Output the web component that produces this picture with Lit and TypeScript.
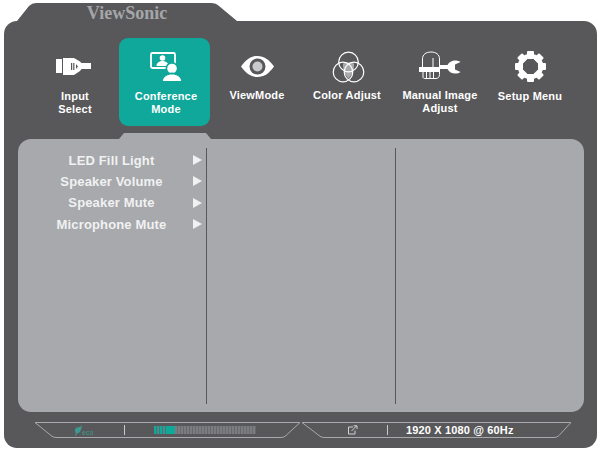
import { LitElement, html, css, svg } from 'lit';
import { customElement } from 'lit/decorators.js';

// icons are drawn in page coordinates, the viewBox is centred on the column
const iconBox = (cx: number) => `${cx - 24} 50 48 36`;

const gearTeeth = Array.from({ length: 8 }, (_, i) => i * 45);

const icons = {
  input: svg`
    <path fill="#fff" d="M56 59h6v14h-6zM63 58h11l6 3.5 1.5 1.5H91v6h-9.5L80 71l-6 4H63z"/>
    <path fill="#58585a" d="M71 63h1.2v7H71zM73.2 63h1.2v7h-1.2zM76 64l2 2.5-2 2.5z"/>`,
  conference: svg`
    <rect x="151" y="53" width="24" height="15" rx="1.5" fill="none" stroke="#fff" stroke-width="1.8"/>
    <circle cx="162.5" cy="58" r="2.8" fill="#fff"/>
    <path fill="#fff" d="M156.5 66c0-3.5 3-5 6-5s6 1.500 6 5z"/>
    <circle cx="172" cy="68.500" r="6.500" fill="#0fa89a"/>
    <circle cx="172" cy="68.500" r="4.800" fill="#fff"/>
    <path fill="#0fa89a" d="M161 82c0-6 5-9.500 11-9.500s11 3.500 11 9.500z"/>
    <path fill="#fff" d="M163 81c0-4 4-6.500 9-6.500s9 2.500 9 6.500z"/>`,
  eye: svg`
    <path fill="#fff" d="M241 66.500C246 59.500 251 56 257.500 56s11.500 3.500 16.500 10.500C269 73.500 264 77 257.500 77S246 73.500 241 66.500z"/>
    <circle cx="257.500" cy="66.500" r="8" fill="#58585a"/>
    <circle cx="257.500" cy="66.500" r="5" fill="#c9cacb"/>`,
  color: svg`
    <path fill="#a7a9ac" d="M343 63.500c3-1.500 7.500-1.500 11 0 .5 6-2 12-5.500 15-3.500-3-6-9-5.500-15z"/>
    <g fill="none" stroke="#fff" stroke-width="1.200">
      <circle cx="348.500" cy="62" r="9.800"/>
      <circle cx="343" cy="72" r="9.800"/>
      <circle cx="354" cy="72" r="9.800"/>
    </g>`,
  manual: svg`
    <path fill="none" stroke="#fff" stroke-width="1" d="M422.500 67V59c0-4.500 3.500-7 8.500-7s8.500 2.500 8.500 7v8M433 67v-9"/>
    <path fill="#fff" d="M419 67h21v5h-21z"/>
    <path fill="none" stroke="#fff" stroke-width="1" d="M423 72v5c0 1 1 1.500 2 1.500h11c2 0 3.500-1.500 3.500-4V72M426.500 72v6M430 72v6M433.500 72v6"/>
    <path fill="#fff" d="M440 65h7.500c1.500-3 4.500-4.500 7.500-4.500 2 0 4 .5 5.500 1.500l-5.500 2.500v5l5.500 2.500c-1.500 1-3.500 1.500-5.500 1.500-3 0-6-1.500-7.500-4.500H440z"/>`,
  setup: svg`
    ${gearTeeth.map(a => svg`<rect x="527" y="51" width="7" height="8" rx="1" fill="#fff" transform="rotate(${a} 530.500 66.500)"/>`)}
    <circle cx="530.500" cy="66.500" r="10.500" fill="none" stroke="#fff" stroke-width="4.500"/>`,
};

const menu = [
  { label: ['Input', 'Select'], icon: icons.input, cx: 75, low: true },
  { label: ['Conference', 'Mode'], icon: icons.conference, cx: 166, active: true, low: true },
  { label: ['ViewMode'], icon: icons.eye, cx: 257 },
  { label: ['Color Adjust'], icon: icons.color, cx: 347 },
  { label: ['Manual Image', 'Adjust'], icon: icons.manual, cx: 440 },
  { label: ['Setup Menu'], icon: icons.setup, cx: 530, low: true },
];

const rows = ['LED Fill Light', 'Speaker Volume', 'Speaker Mute', 'Microphone Mute'];

const bars = Array.from({ length: 34 }, (_, i) => i);

@customElement('app-root')
export class AppRoot extends LitElement {
  static styles = css`
    :host {
      display: block;
      width: 600px;
      height: 457px;
      box-sizing: border-box;
      padding-top: 3px;
      background: #fff;
      font-family: "Liberation Sans", Arial, sans-serif;
      overflow: hidden;
    }
    .tab {
      margin-left: 17px;
      width: 220px;
      height: 18px;
      box-sizing: border-box;
      padding: 3px 0 0 0;
      background: #58585a;
      clip-path: path('M0 18 L12 3 Q15 0 19 0 L194 0 Q199 0 202 3 L220 18 Z');
      display: flex;
      justify-content: center;
      align-items: center;
      font-family: "Liberation Serif", "Times New Roman", serif;
      font-weight: bold;
      font-size: 18px;
      color: #a4a6a9;
    }
    .shell {
      margin: 0 3px 0 4px;
      height: 427px;
      box-sizing: border-box;
      padding-top: 17px;
      background: #58585a;
      border-radius: 13px;
    }
    .menu {
      display: grid;
      grid-template-columns: 89px 91px 94px 86px 100px 80px;
      margin-left: 26px;
      height: 88px;
    }
    .item {
      display: flex;
      flex-direction: column;
      align-items: center;
      padding-top: 12px;
      box-sizing: border-box;
      border-radius: 9px;
      color: #fff;
      font-weight: bold;
      font-size: 11px;
      line-height: 13px;
      letter-spacing: 0.2px;
      text-align: center;
      white-space: nowrap;
    }
    .item:first-child {
      padding-left: 1px;
    }
    .item.active {
      padding-left: 3px;
      background: #0fa89a;
    }
    .item svg {
      display: block;
      width: 48px;
      height: 36px;
      margin-bottom: 3px;
    }
    .item.low svg {
      margin-bottom: 4px;
    }
    .notch {
      margin: 7px 0 0 115px;
      width: 92px;
      height: 6px;
      background: #a7a9ac;
      clip-path: polygon(0 100%, 5px 0, 87px 0, 100% 100%);
    }
    .panel {
      margin-left: 14px;
      width: 566px;
      height: 273px;
      box-sizing: border-box;
      padding: 9px 0 8px;
      background: #a7a9ac;
      border-radius: 13px;
      display: grid;
      grid-template-columns: 188.5px 189px 1fr;
    }
    .col {
      border-right: 1.5px solid #58585a;
    }
    .col:first-child {
      padding-top: 1.5px;
    }
    .col:last-child {
      border-right: none;
    }
    .row {
      display: flex;
      align-items: center;
      height: 21.3px;
      padding-left: 34px;
      color: #f1f1f2;
      font-weight: bold;
      font-size: 13px;
      letter-spacing: 0.15px;
    }
    .row span {
      width: 119px;
      text-align: center;
      white-space: nowrap;
    }
    .arrow {
      margin-left: 22px;
      width: 0;
      height: 0;
      border-left: 9px solid #f1f1f2;
      border-top: 5px solid transparent;
      border-bottom: 5px solid transparent;
    }
    .status {
      display: flex;
      gap: 2px;
      margin: 10px 0 0 31px;
      height: 16px;
    }
    .seg {
      position: relative;
      display: flex;
      align-items: center;
      height: 16px;
    }
    .seg.left {
      width: 265px;
    }
    .seg.right {
      width: 269px;
    }
    .seg > svg.frame {
      position: absolute;
      left: 0;
      top: 0;
    }
    .eco {
      display: flex;
      align-items: flex-end;
      margin-left: 39px;
      width: 50px;
      color: #3b9a92;
      font-size: 7px;
      line-height: 7px;
    }
    .sep {
      width: 1px;
      height: 10px;
      background: #c9cacb;
    }
    .level {
      display: flex;
      margin-left: 29px;
      height: 8px;
      background: #69696c;
    }
    .level i {
      width: 2px;
      margin-right: 1px;
      background: #7b7c7f;
    }
    .level i.on {
      background: #0fa89a;
    }
    .level i.solid {
      margin-right: 0;
      width: 3px;
    }
    .link {
      margin-left: 45px;
      margin-right: 29px;
      display: block;
    }
    .res {
      margin-left: 18px;
      color: #fff;
      font-weight: bold;
      font-size: 11px;
      letter-spacing: 0.15px;
      white-space: nowrap;
    }
  `;

  render() {
    return html`
      <div class="tab">ViewSonic</div>
      <div class="shell">
        <div class="menu">
          ${menu.map(m => html`
            <div class="item ${m.active ? 'active' : ''} ${m.low ? 'low' : ''}">
              <svg viewBox=${iconBox(m.cx)}>${m.icon}</svg>
              ${m.label.map(l => html`<div>${l}</div>`)}
            </div>
          `)}
        </div>
        <div class="notch"></div>
        <div class="panel">
          <div class="col">
            ${rows.map(r => html`<div class="row"><span>${r}</span><div class="arrow"></div></div>`)}
          </div>
          <div class="col"></div>
          <div class="col"></div>
        </div>
        <div class="status">
          <div class="seg left">
            <svg class="frame" width="265" height="16" viewBox="0 0 265 16">
              <path fill="none" stroke="#a7a9ac" stroke-width="1" d="M0 .5H265L251 13.500Q249 15.500 246 15.500H21Q18 15.500 16 13.500Z"/>
            </svg>
            <div class="eco">
              <svg width="8" height="11" viewBox="0 0 8 11">
                <path fill="#3b9a92" d="M8 0C7.500 3 7 8 3 8.500L2 11 1 10.500 2 8C0 6 1 3 3 2.500 5 2 7 2 8 0z"/>
              </svg>
              <span>eco</span>
            </div>
            <div class="sep"></div>
            <div class="level">
              ${bars.map(i => html`<i class="${i < 7 ? 'on' : ''} ${i >= 4 && i < 7 ? 'solid' : ''}"></i>`)}
            </div>
          </div>
          <div class="seg right">
            <svg class="frame" width="269" height="16" viewBox="0 0 269 16">
              <path fill="none" stroke="#a7a9ac" stroke-width="1" d="M0 .5H269L257 13.500Q255 15.500 252 15.500H22Q19 15.500 17 13.500Z"/>
            </svg>
            <svg class="link" width="11" height="10" viewBox="0 0 11 10">
              <path fill="none" stroke="#d1d2d3" stroke-width="1" d="M6 2H1.500V9H8V5.500M4.500 6L9.500 1M6.500 .8H10V4"/>
            </svg>
            <div class="sep"></div>
            <div class="res">1920 X 1080 @ 60Hz</div>
          </div>
        </div>
      </div>
    `;
  }
}
